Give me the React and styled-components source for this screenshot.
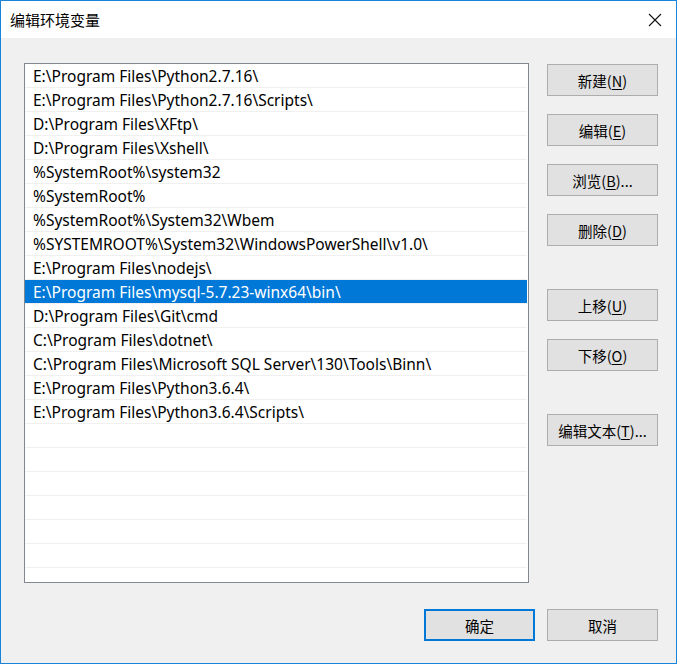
import React from "react";
import styled, { createGlobalStyle } from "styled-components";

const paths = [
  "E:\\Program Files\\Python2.7.16\\",
  "E:\\Program Files\\Python2.7.16\\Scripts\\",
  "D:\\Program Files\\XFtp\\",
  "D:\\Program Files\\Xshell\\",
  "%SystemRoot%\\system32",
  "%SystemRoot%",
  "%SystemRoot%\\System32\\Wbem",
  "%SYSTEMROOT%\\System32\\WindowsPowerShell\\v1.0\\",
  "E:\\Program Files\\nodejs\\",
  "E:\\Program Files\\mysql-5.7.23-winx64\\bin\\",
  "D:\\Program Files\\Git\\cmd",
  "C:\\Program Files\\dotnet\\",
  "C:\\Program Files\\Microsoft SQL Server\\130\\Tools\\Binn\\",
  "E:\\Program Files\\Python3.6.4\\",
  "E:\\Program Files\\Python3.6.4\\Scripts\\",
];

const SELECTED = 9;
const TOTAL_ROWS = 22;

const App = () => {
  const rows = [];
  for (let i = 0; i < TOTAL_ROWS; i++) rows.push(paths[i] || "");

  return (
    <>
      <GlobalStyle />
      <Window>
        <TitleBar>
          <Title>编辑环境变量</Title>
          <Close>
            <svg width="14" height="14" viewBox="0 0 14 14">
              <path d="M1 1 L13 13 M13 1 L1 13" stroke="#111" strokeWidth="1.1" />
            </svg>
          </Close>
        </TitleBar>
        <Body>
          <Main>
            <List>
              {rows.map((p, i) => (
                <Row key={i} $selected={i === SELECTED}>
                  {p}
                </Row>
              ))}
            </List>
            <Side>
              <Button>新建(<u>N</u>)</Button>
              <Button>编辑(<u>E</u>)</Button>
              <Button>浏览(<u>B</u>)...</Button>
              <Button>删除(<u>D</u>)</Button>
              <Spacer />
              <Button>上移(<u>U</u>)</Button>
              <Button>下移(<u>O</u>)</Button>
              <Spacer />
              <Button>编辑文本(<u>T</u>)...</Button>
            </Side>
          </Main>
          <Footer>
            <Button $primary>确定</Button>
            <Button>取消</Button>
          </Footer>
        </Body>
      </Window>
    </>
  );
};

export default App;

const GlobalStyle = createGlobalStyle`
  html, body {
    margin: 0;
    padding: 0;
    background: #fff;
  }
  * {
    box-sizing: border-box;
  }
`;

const Window = styled("div")`
  width: 677px;
  height: 664px;
  border: 1px solid #1883d7;
  display: flex;
  flex-direction: column;
  font-family: "Noto Sans", "Noto Sans CJK SC", sans-serif;
  color: #000;
`;

const TitleBar = styled("div")`
  height: 37px;
  background: #fff;
  display: flex;
  align-items: center;
  justify-content: space-between;
  padding: 0 14px 0 9px;
`;

const Title = styled("span")`
  font-family: "Noto Sans CJK SC", sans-serif;
  font-size: 15px;
  color: #000;
`;

const Close = styled("div")`
  display: flex;
  align-items: center;
  padding-top: 1px;
`;

const Body = styled("div")`
  flex: 1;
  background: #f0f0f0;
  display: flex;
  flex-direction: column;
  padding: 25px 18px 22px 23px;
`;

const Main = styled("div")`
  display: flex;
  gap: 18px;
`;

const List = styled("div")`
  width: 505px;
  height: 520px;
  border: 1px solid #828790;
  background: #fff;
  overflow: hidden;
  padding-right: 1px;
`;

const Row = styled("div")`
  height: 24px;
  line-height: 25px;
  border-bottom: 1px solid #f0f0f0;
  padding-left: 8px;
  font-size: 15.5px;
  white-space: nowrap;
  background: ${(p) => (p.$selected ? "#0078d7" : "transparent")};
  color: ${(p) => (p.$selected ? "#fff" : "#000")};
`;

const Side = styled("div")`
  display: flex;
  flex-direction: column;
  gap: 18px;
  padding-top: 1px;
`;

const Spacer = styled("div")`
  height: 7px;
`;

const Button = styled("div")`
  width: 111px;
  height: 32px;
  background: #e1e1e1;
  border: ${(p) => (p.$primary ? "2px solid #0078d7" : "1px solid #adadad")};
  display: flex;
  align-items: center;
  justify-content: center;
  font-size: 14.5px;
  font-family: "Noto Sans CJK SC", sans-serif;
  color: #000;
  white-space: nowrap;

  u {
    text-decoration-thickness: 1px;
    text-underline-offset: 2px;
  }
`;

const Footer = styled("div")`
  margin-top: auto;
  display: flex;
  justify-content: flex-end;
  gap: 12px;
`;
